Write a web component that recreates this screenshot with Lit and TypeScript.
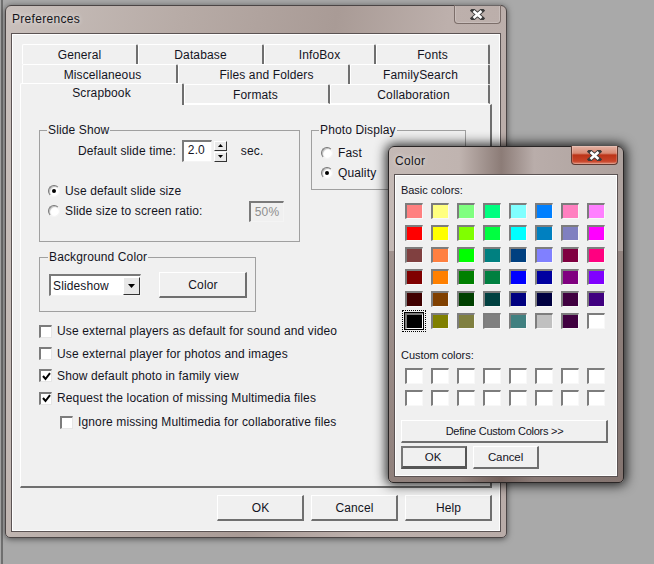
import { LitElement, html, css, svg } from "lit";
import { customElement } from "lit/decorators.js";

const tabRows: { label: string; w: number; sel?: boolean; dx?: number }[][] = [
  [{ label: "General", w: 116 }, { label: "Database", w: 126 }, { label: "InfoBox", w: 112 }, { label: "Fonts", w: 114 }],
  [{ label: "Miscellaneous", w: 156, dx: 6 }, { label: "Files and Folders", w: 172, dx: 6 }, { label: "FamilySearch", w: 140, dx: 2 }],
  [{ label: "Scrapbook", w: 164, sel: true }, { label: "Formats", w: 146, dx: -2 }, { label: "Collaboration", w: 160, dx: 8 }],
];

const basic = [
  "#ff8080", "#ffff80", "#80ff80", "#00ff80", "#80ffff", "#0080ff", "#ff80c0", "#ff80ff",
  "#ff0000", "#ffff00", "#80ff00", "#00ff40", "#00ffff", "#0080c0", "#8080c0", "#ff00ff",
  "#804040", "#ff8040", "#00ff00", "#008080", "#004080", "#8080ff", "#800040", "#ff0080",
  "#800000", "#ff8000", "#008000", "#008040", "#0000ff", "#0000a0", "#800080", "#8000ff",
  "#400000", "#804000", "#004000", "#004040", "#000080", "#000040", "#400040", "#400080",
  "#000000", "#808000", "#808040", "#808080", "#408080", "#c0c0c0", "#400040", "#ffffff",
];

const closeX = svg`<svg class="x" width="15" height="11" viewBox="0 0 15 11"><path d="M3 1.5 L12 9.5 M12 1.5 L3 9.5" stroke="#3a3a3a" stroke-width="4.4" stroke-linecap="square" fill="none"/><path d="M3.5 2 L11.5 9 M11.5 2 L3.5 9" stroke="#fff" stroke-width="2.6" fill="none"/></svg>`;

const check = svg`<svg width="9" height="9" viewBox="0 0 9 9"><path d="M1 4 L3.5 7 L8 1.2" stroke="#000" stroke-width="2" fill="none"/></svg>`;

@customElement("app-root")
export class AppRoot extends LitElement {
  static styles = css`
    :host { display: block; width: 654px; height: 564px; }
    * { box-sizing: border-box; }
    .desktop {
      position: relative; width: 654px; height: 564px; overflow: hidden;
      background: #a9a9a9;
      font: 12px "Liberation Sans", Arial, sans-serif; color: #14141e; letter-spacing: 0.13px;
    }
    .edge { position: absolute; left: 1px; top: 0; bottom: 0; width: 2px; background: #6f6f6f; }
    .win {
      position: absolute; display: flex; flex-direction: column;
      border: 1px solid #4b4545; border-radius: 6px 6px 5px 5px; padding: 0 5px 5px;
    }
    .main {
      left: 5px; top: 5px; width: 502px; height: 533px;
      background: linear-gradient(100deg, #c9c0bc 0%, #b7aba6 30%, #a99b96 56%, #bdb0ac 75%, #b9aca8 100%);
      box-shadow: 0 1px 6px rgba(0,0,0,.55);
    }
    .dialog {
      left: 388px; top: 146px; width: 236px; height: 337px;
      border-color: #2a2626;
      background:
        linear-gradient(180deg, transparent 0, transparent 31%, rgba(80,60,55,.3) 31%, rgba(80,60,55,.45) 100%),
        linear-gradient(90deg, #c4b9b5 0%, #c0b4b0 30%, #8c7c77 48%, #b9adaa 62%, #aea29e 100%);
      box-shadow: 0 0 12px 2px rgba(0,0,0,.85);
    }
    .title { height: 27px; flex: none; display: flex; align-items: center; padding: 0 1px; position: relative; color: #15151a; letter-spacing: 0.3px; text-shadow: 0 0 5px rgba(255,255,255,.8); }
    .main .title { padding-bottom: 2px; }
    .close {
      position: absolute; top: -1px; right: 0; width: 47px; height: 19px;
      display: flex; align-items: center; justify-content: center;
      border: 1px solid #7c6e6a; border-top: none; border-radius: 0 0 4px 4px;
      box-shadow: inset 0 0 0 1px rgba(255,255,255,.18);
    }
    .close.red { background: linear-gradient(#e3b3a5 0%, #d98a74 40%, #bb3418 50%, #c9452a 85%, #dd8d78 100%); border-color: #5e3a32; }
    .body { flex: 1; background: #f0f0f0; border: 1px solid #5b5353; box-shadow: inset 0 0 0 1px #fff; display: flex; flex-direction: column; min-height: 0; }

    /* tabs */
    .main .body { padding: 10px 8px 0 8px; }
    .tabs { display: flex; flex-direction: column; }
    .row { display: flex; height: 20px; padding-left: 2px; }
    .row.front { padding-left: 0; }
    .tab {
      display: flex; align-items: center; justify-content: center; padding-top: 1px;
      border-top: 1px solid #fff; border-left: 1px solid #fff; border-right: 2px solid #6f6f6f;
      border-radius: 2px 2px 0 0; background: #f0f0f0;
    }
    .tab.sel { height: 22px; margin-top: -1px; position: relative; z-index: 1; padding-top: 0; padding-bottom: 4px; }
    .front .tab:not(.sel) { border-bottom: 1px solid #fff; }
    .page {
      height: 384px; width: 472px; flex: none;
      border-left: 1px solid #fff; border-top: 1px solid #fff; border-right: 2px solid #6f6f6f; border-bottom: 2px solid #6f6f6f;
      padding: 18px 0 0 18px;
    }
    fieldset { margin: 0; padding: 0; border: 1px solid #a0a0a0; min-width: 0; }
    legend { padding: 0 1px; margin-left: -1px; line-height: 14px; height: 14px; }
    .top { display: flex; gap: 11px; align-items: flex-start; }
    .slide { width: 261px; height: 119px; padding: 3px 0 0 8px; flex: none; }
    .photo { width: 155px; height: 67px; padding: 0 0 0 9px; flex: none; }
    .photo legend { margin-left: -2px; }
    .time { display: flex; align-items: center; height: 22px; padding-left: 30px; margin-bottom: 19px; }
    .field { background: #fff; border: 2px solid; border-color: #7a7a7a #f4f4f4 #f4f4f4 #7a7a7a; border-right-width: 1px; border-bottom-width: 1px; }
    .num { width: 30px; height: 22px; margin-left: 6px; padding-left: 4px; line-height: 17px; }
    .spin { display: flex; flex-direction: column; gap: 1px; margin-left: 2px; width: 13px; }
    .spin i { display: flex; height: 10px; align-items: center; justify-content: center; background: #e9e9e9; border: 1px solid; border-color: #fff #333 #333 #fff; }
    .sec { margin-left: 14px; }
    .opt { display: flex; align-items: center; height: 20px; }
    .radio {
      width: 12px; height: 12px; border-radius: 50%; flex: none; margin-right: 5px;
      background: #fff; border: 1px solid; border-color: #777 #f4f4f4 #f4f4f4 #777; box-shadow: inset 1px 1px 1px #bbb;
      display: flex; align-items: center; justify-content: center;
    }
    .radio b { width: 4px; height: 4px; background: #000; border-radius: 50%; }
    .ratio { justify-content: space-between; padding-right: 15px; }
    .ratio > span { display: flex; align-items: center; }
    .pct { width: 35px; height: 21px; background: #f0f0f0; color: #8e8e8e; display: flex; align-items: center; justify-content: center; }
    .photo .opt:first-of-type { margin-top: 6px; }
    .bg { width: 217px; height: 62px; margin-top: 8px; padding: 10px 0 0 9px; display: flex; }
    .bg-row { display: flex; gap: 18px; }
    .select { width: 92px; height: 22px; display: flex; align-items: center; justify-content: space-between; padding-left: 2px; }
    .arrow { width: 17px; height: 18px; display: flex; align-items: center; justify-content: center; background: #e8e8e8; border: 1px solid; border-color: #fff #333 #333 #fff; }
    .btn {
      display: flex; align-items: center; justify-content: center; background: #f0f0f0; padding-left: 1px;
      border: 1px solid; border-color: #fff #6f6f6f #6f6f6f #fff; border-right-width: 2px; border-bottom-width: 2px;
    }
    .btn.color { width: 88px; height: 26px; margin-top: -2px; }
    .checks { margin-top: 8px; display: flex; flex-direction: column; }
    .chk { display: flex; align-items: center; height: 22.4px; }
    .chk.sub { padding-left: 21px; height: 25px; }
    .box {
      width: 13px; height: 13px; margin-right: 5px; flex: none; background: #fff;
      border: 2px solid; border-color: #7c7c7c #e6e6e6 #e6e6e6 #7c7c7c; border-right-width: 1px; border-bottom-width: 1px;
      display: flex; align-items: center; justify-content: center;
    }
    .box svg { display: block; }
    .actions { display: flex; justify-content: flex-end; gap: 7px; padding-top: 7px; }
    .actions .btn { width: 87px; height: 26px; }

    /* colour dialog */
    .dialog .body { padding: 9px 0 0 6px; }
    .dialog .title { padding-top: 1px; }
    .lab { line-height: 13px; letter-spacing: -0.05px; font-size: 11px; }
    .grid { display: grid; grid-template-columns: repeat(8, 18px); column-gap: 8px; row-gap: 6px; margin: 6px 0 0 4px; }
    .sw { width: 18px; height: 16px; border: 2px solid; border-color: #7d7d7d #f8f8f8 #f8f8f8 #7d7d7d; border-right-width: 1px; border-bottom-width: 1px; }
    .sw.cur { outline: 1px dotted #000; outline-offset: 2px; box-shadow: 0 0 0 1px #000; }
    .lab.c { margin-top: 20px; }
    .grid.c { margin-top: 6px; }
    .def { width: 207px; height: 23px; margin-top: 14px; font-size: 11px; letter-spacing: -0.25px; }
    .dlg-actions { display: flex; gap: 6px; margin-top: 3px; font-size: 11.5px; letter-spacing: -0.1px; }
    .dlg-actions .btn { width: 66px; height: 23px; padding-left: 0; }
    .dlg-actions .ok { border: 2px solid; border-color: #777 #555 #555 #777; border-bottom-width: 3px; padding-right: 2px; }
  `;

  private tab(t: { label: string; w: number; sel?: boolean; dx?: number }) {
    const pad = t.dx ? `padding-left:${t.dx > 0 ? t.dx : 0}px;padding-right:${t.dx < 0 ? -t.dx : 0}px;` : "";
    return html`<div class="tab ${t.sel ? "sel" : ""}" style="width:${t.w}px;${pad}">${t.label}</div>`;
  }

  private radio(on: boolean) {
    return html`<span class="radio">${on ? html`<b></b>` : ""}</span>`;
  }

  private chk(label: string, on: boolean, sub = false) {
    return html`<div class="chk ${sub ? "sub" : ""}"><span class="box">${on ? check : ""}</span>${label}</div>`;
  }

  render() {
    return html`<div class="desktop">
      <div class="edge"></div>
      <div class="win main">
        <div class="title">Preferences<div class="close">${closeX}</div></div>
        <div class="body">
          <div class="tabs">
            ${tabRows.map((r, i) => html`<div class="row ${i === 2 ? "front" : ""}">${r.map((t) => this.tab(t))}</div>`)}
          </div>
          <div class="page">
            <div class="top">
              <div>
                <fieldset class="slide">
                  <legend>Slide Show</legend>
                  <div class="time">
                    Default slide time:
                    <span class="field num">2.0</span>
                    <span class="spin">
                      <i><svg width="5" height="3"><path d="M2.5 0 L5 3 H0 Z" fill="#000"/></svg></i>
                      <i><svg width="5" height="3"><path d="M0 0 H5 L2.5 3 Z" fill="#000"/></svg></i>
                    </span>
                    <span class="sec">sec.</span>
                  </div>
                  <div class="opt">${this.radio(true)}Use default slide size</div>
                  <div class="opt ratio"><span>${this.radio(false)}Slide size to screen ratio:</span><span class="field pct">50%</span></div>
                </fieldset>
                <fieldset class="bg">
                  <legend>Background Color</legend>
                  <div class="bg-row">
                    <div class="field select">Slideshow<span class="arrow"><svg width="7" height="4"><path d="M0 0 H7 L3.5 4 Z" fill="#000"/></svg></span></div>
                    <div class="btn color">Color</div>
                  </div>
                </fieldset>
              </div>
              <fieldset class="photo">
                <legend>Photo Display</legend>
                <div class="opt">${this.radio(false)}Fast</div>
                <div class="opt">${this.radio(true)}Quality</div>
              </fieldset>
            </div>
            <div class="checks">
              ${this.chk("Use external players as default for sound and video", false)}
              ${this.chk("Use external player for photos and images", false)}
              ${this.chk("Show default photo in family view", true)}
              ${this.chk("Request the location of missing Multimedia files", true)}
              ${this.chk("Ignore missing Multimedia for collaborative files", false, true)}
            </div>
          </div>
          <div class="actions">
            <div class="btn">OK</div>
            <div class="btn">Cancel</div>
            <div class="btn">Help</div>
          </div>
        </div>
      </div>

      <div class="win dialog">
        <div class="title">Color<div class="close red">${closeX}</div></div>
        <div class="body">
          <div class="lab">Basic colors:</div>
          <div class="grid">
            ${basic.map((c, i) => html`<div class="sw ${i === 40 ? "cur" : ""}" style="background:${c}"></div>`)}
          </div>
          <div class="lab c">Custom colors:</div>
          <div class="grid c">
            ${Array.from({ length: 16 }, () => html`<div class="sw" style="background:#fff"></div>`)}
          </div>
          <div class="btn def">Define Custom Colors &gt;&gt;</div>
          <div class="dlg-actions">
            <div class="btn ok">OK</div>
            <div class="btn">Cancel</div>
          </div>
        </div>
      </div>
    </div>`;
  }
}
